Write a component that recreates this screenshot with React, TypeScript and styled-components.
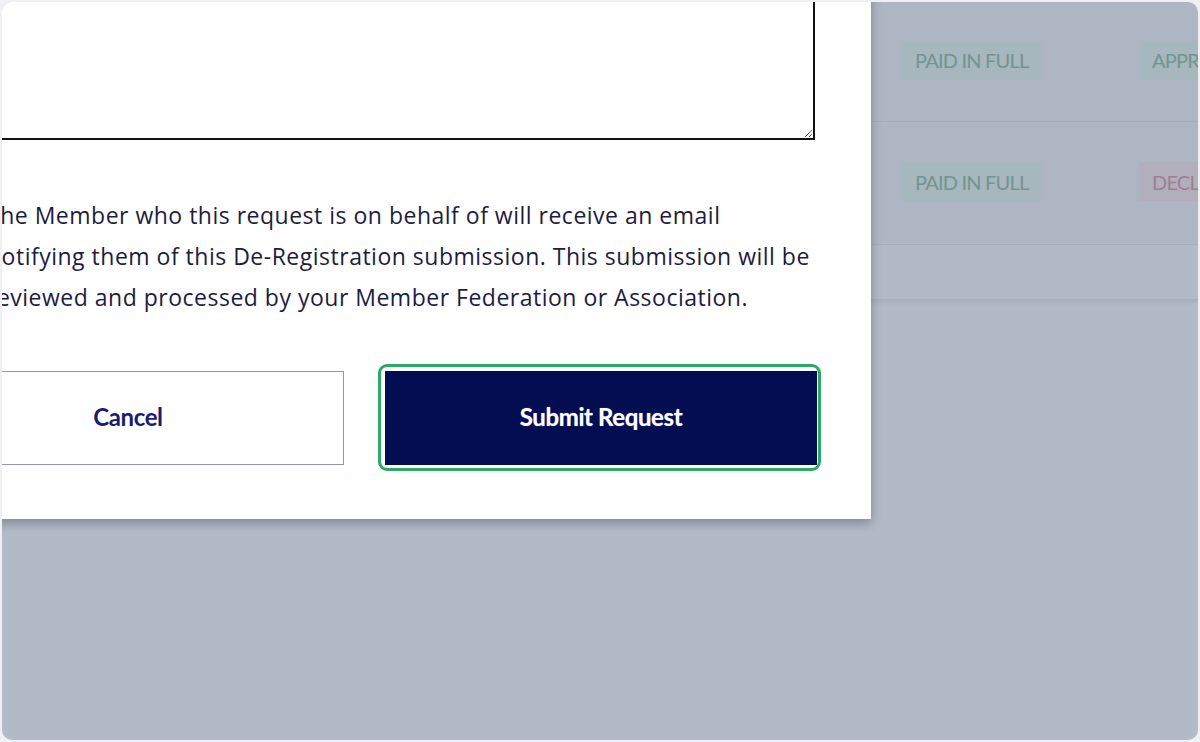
import React from "react";
import styled, { createGlobalStyle } from "styled-components";

const GlobalStyle = createGlobalStyle`
  html, body {
    margin: 0;
    padding: 0;
    background: #eef0f5;
    font-family: Lato, "Open Sans", sans-serif;
  }
  * { box-sizing: border-box; }
`;

const Frame = styled.div`
  width: 1200px;
  height: 742px;
  padding: 2px;
`;

const Screen = styled.div`
  position: relative;
  width: 100%;
  height: 100%;
  border-radius: 10px;
  overflow: hidden;
  background: #ffffff;
`;

const TableCard = styled.div`
  display: flex;
  flex-direction: column;
  background: #ffffff;
  box-shadow: 0 2px 4px rgba(0, 0, 0, 0.08);
`;

const Row = styled.div<{ $h: number; $last?: boolean }>`
  display: grid;
  grid-template-columns: 900px 237px 1fr;
  align-items: center;
  height: ${(p) => p.$h}px;
  padding-bottom: 3px;
  background: ${(p) => (p.$last ? "#ffffff" : "#f9fafb")};
  border-bottom: 1px solid #eceef1;
`;

const Badge = styled.span<{ $tone: "green" | "red" }>`
  justify-self: start;
  display: inline-flex;
  align-items: center;
  height: 39px;
  padding: 0 13px;
  font-size: 20px;
  letter-spacing: -0.8px;
  text-transform: uppercase;
  white-space: nowrap;
  background: ${(p) => (p.$tone === "green" ? "#eefcf1" : "#fff0f1")};
  color: ${(p) => (p.$tone === "green" ? "#a6c9b2" : "#e6aab8")};
`;

const Overlay = styled.div`
  position: absolute;
  inset: 0;
  background: rgba(1, 25, 68, 0.3);
`;

const Modal = styled.div`
  position: absolute;
  left: -144px;
  top: -62px;
  width: 1013px;
  padding: 40px 54px 54px;
  background: #ffffff;
  box-shadow: 0 4px 10px rgba(0, 0, 0, 0.28);
  display: flex;
  flex-direction: column;
`;

const Reason = styled.textarea`
  display: block;
  width: calc(100% - 2px);
  height: 160px;
  border: 2px solid #111111;
  border-radius: 0;
  resize: both;
  font: inherit;
  outline: none;
`;

const Notice = styled.p`
  margin: 55px 0 53px 75px;
  font-family: "Open Sans", Lato, sans-serif;
  font-size: 23px;
  line-height: 41px;
  letter-spacing: 0.5px;
  color: #1c1d40;
`;

const Actions = styled.div`
  display: grid;
  grid-template-columns: 1fr 1fr;
  gap: 41px;
`;

const ActionButton = styled.button<{ $primary?: boolean }>`
  position: relative;
  height: 94px;
  padding: 0 0 4px;
  font-family: Lato, sans-serif;
  font-weight: 700;
  font-size: 24px;
  letter-spacing: -0.4px;
  cursor: pointer;
  border: 1px solid ${(p) => (p.$primary ? "#020d52" : "#9393bd")};
  background: ${(p) => (p.$primary ? "#020d52" : "#ffffff")};
  color: ${(p) => (p.$primary ? "#ffffff" : "#1b1c70")};
  text-shadow: ${(p) => (p.$primary ? "0 0 1px rgba(255,255,255,0.6)" : "none")};

  ${(p) =>
    p.$primary &&
    `
    &::after {
      content: "";
      position: absolute;
      inset: -8px -5px -7px -8px;
      border: 3px solid #2ea866;
      border-radius: 9px;
      pointer-events: none;
    }
  `}
`;

export default function App() {
  return (
    <>
      <GlobalStyle />
      <Frame>
        <Screen>
          <TableCard>
            <Row $h={120}>
              <span />
              <Badge $tone="green">Paid in full</Badge>
              <Badge $tone="green">Approved</Badge>
            </Row>
            <Row $h={123}>
              <span />
              <Badge $tone="green">Paid in full</Badge>
              <Badge $tone="red">Declined</Badge>
            </Row>
            <Row $h={55} $last />
          </TableCard>
          <Overlay />
          <Modal>
            <Reason aria-label="Reason" />
            <Notice>
              The Member who this request is on behalf of will receive an email
              notifying them of this De-Registration submission. This submission
              will be reviewed and processed by your Member Federation or
              Association.
            </Notice>
            <Actions>
              <ActionButton>Cancel</ActionButton>
              <ActionButton $primary>Submit Request</ActionButton>
            </Actions>
          </Modal>
        </Screen>
      </Frame>
    </>
  );
}
